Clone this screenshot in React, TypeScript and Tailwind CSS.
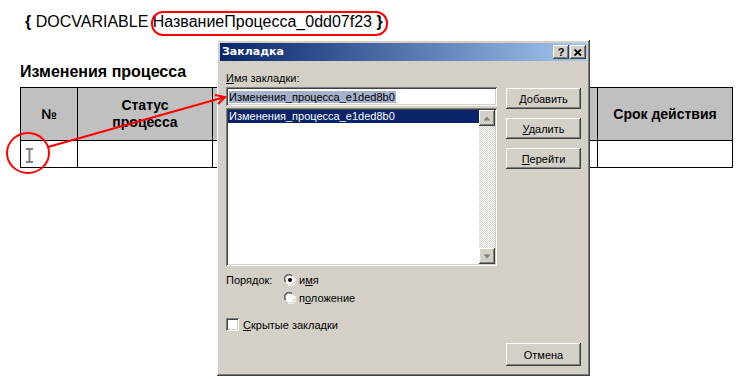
import React from 'react'

// classic win2k bevels
const raised =
  'bg-[#d4d0c8] shadow-[inset_-1px_-1px_#404040,inset_1px_1px_#ffffff,inset_-2px_-2px_#808080,inset_2px_2px_#d4d0c8]'
const sunken =
  'shadow-[inset_1px_1px_#808080,inset_-1px_-1px_#ffffff,inset_2px_2px_#404040,inset_-2px_-2px_#d4d0c8]'

function WinButton({ children, className = '' }: { children: React.ReactNode; className?: string }) {
  return (
    <div className={`${raised} flex h-[21px] w-[75px] items-center justify-center text-black ${className}`}>
      {children}
    </div>
  )
}

function Radio({ checked }: { checked?: boolean }) {
  return (
    <svg width="12" height="12" viewBox="0 0 12 12" className="shrink-0">
      <path d="M1 8 A5 5 0 0 1 8 1" fill="none" stroke="#808080" strokeWidth="1" />
      <path d="M4 11 A5 5 0 0 0 11 4" fill="none" stroke="#ffffff" strokeWidth="1" />
      <circle cx="6" cy="6" r="4.5" fill="#ffffff" />
      <path d="M2 8 A4 4 0 0 1 8 2" fill="none" stroke="#404040" strokeWidth="1" />
      {checked && <circle cx="6" cy="6" r="2" fill="#000000" />}
    </svg>
  )
}

function ScrollArrow({ up }: { up?: boolean }) {
  return (
    <div className={`${raised} flex h-[16px] w-[16px] items-center justify-center`}>
      <svg width="8" height="5" viewBox="0 0 8 5">
        {up ? (
          <polygon points="4,0.5 7.5,4.5 0.5,4.5" fill="#808080" />
        ) : (
          <polygon points="0.5,0.5 7.5,0.5 4,4.5" fill="#808080" />
        )}
      </svg>
    </div>
  )
}

function BookmarkDialog() {
  return (
    <div
      className={`${raised} absolute left-[217px] top-[40px] flex h-[336px] w-[373px] flex-col p-[3px] font-['Liberation_Sans',Arial,sans-serif] text-[11px] leading-[12px]`}
    >
      {/* Title bar */}
      <div className="flex h-[18px] items-center bg-gradient-to-r from-[#0a246a] to-[#a6caf0] pl-[2px] pr-[1px]">
        <span className="flex-1 font-['DejaVu_Sans',sans-serif] text-[11px] font-bold text-white">Закладка</span>
        <div className={`${raised} flex h-[14px] w-[16px] items-center justify-center text-[11px] font-bold text-black`}>?</div>
        <div className={`${raised} ml-[1px] flex h-[14px] w-[16px] items-center justify-center`}>
          <svg width="8" height="7" viewBox="0 0 8 7">
            <path d="M0.5 0.5 L7 6.5 M7 0.5 L0.5 6.5" stroke="#000" strokeWidth="1.8" />
          </svg>
        </div>
      </div>

      <div className="flex flex-1 gap-[9px] pl-[6px]">
        {/* left column */}
        <div className="flex w-[271px] flex-col">
          <div className="mt-[11px] h-[12px]">
            <u>И</u>мя закладки:
          </div>
          <div className={`${sunken} mt-[3px] flex h-[19px] items-center bg-white pl-[3px]`}>
            <span className="bg-[#a6b2cc] pr-[1px] text-black">Изменения_процесса_e1ded8b0</span>
          </div>
          <div className={`${sunken} mt-[2px] flex h-[158px] bg-white p-[2px]`}>
            <div className="flex-1">
              <div className="h-[13px] bg-[#0a246a] pl-[1px] text-white">Изменения_процесса_e1ded8b0</div>
            </div>
            <div className="flex w-[16px] flex-col justify-between bg-[repeating-conic-gradient(#d4d0c8_0_25%,#ffffff_0_50%)] bg-[length:2px_2px]">
              <ScrollArrow up />
              <ScrollArrow />
            </div>
          </div>

          <div className="mt-[7px] flex h-[13px] items-center">
            <span className="w-[58px]">Порядок:</span>
            <Radio checked />
            <span className="ml-[3px]">
              и<u>м</u>я
            </span>
          </div>
          <div className="mt-[5px] flex h-[13px] items-center pl-[58px]">
            <Radio />
            <span className="ml-[3px]">
              п<u>о</u>ложение
            </span>
          </div>
          <div className="mt-[14px] flex h-[13px] items-center">
            <div className={`${sunken} h-[13px] w-[13px] bg-white`} />
            <span className="ml-[4px]">
              <u>С</u>крытые закладки
            </span>
          </div>
        </div>

        {/* right column */}
        <div className="flex flex-col pt-[27px]">
          <WinButton>
            <span>
              <u>Д</u>обавить
            </span>
          </WinButton>
          <WinButton className="mt-[9px]">
            <span>
              <u>У</u>далить
            </span>
          </WinButton>
          <WinButton className="mt-[9px]">
            <span>
              <u>П</u>ерейти
            </span>
          </WinButton>
          <WinButton className="mb-[7px] mt-auto h-[23px]">Отмена</WinButton>
        </div>
      </div>
    </div>
  )
}

export default function App() {
  return (
    <div className="relative h-[379px] w-[737px] overflow-hidden bg-white font-['Liberation_Sans',Arial,sans-serif] text-black">
      {/* Document */}
      <div className="pl-[20px]">
        <div className="pl-[5px] pt-[13px] text-[16px] leading-[18px]">
          <b>{'{'}</b> DOCVARIABLE НазваниеПроцесса_0dd07f23 <b>{'}'}</b>
        </div>
        <div className="mt-[32px] text-[16px] font-bold leading-[18px]">Изменения процесса</div>

        <div className="mt-[6px] grid w-[713px] grid-cols-[57px_135px_193px_192px_135px] border-l border-t border-black text-[14px] font-bold leading-[17px]">
          <div className="flex h-[53px] items-center justify-center border-b border-r border-black bg-[#c0c0c0]">№</div>
          <div className="flex h-[53px] items-center justify-center border-b border-r border-black bg-[#c0c0c0] text-center">
            Статус
            <br />
            процесса
          </div>
          <div className="h-[53px] border-b border-r border-black bg-[#c0c0c0]" />
          <div className="h-[53px] border-b border-r border-black bg-[#c0c0c0]" />
          <div className="flex h-[53px] items-center justify-center border-b border-r border-black bg-[#c0c0c0]">
            Срок действия
          </div>
          <div className="h-[27px] border-b border-r border-black pl-[4px] pt-[7px]">
            <svg width="9" height="15" viewBox="0 0 9 15">
              <path d="M1 1 H8 M4.5 1 V14 M1 14 H8" stroke="#808080" strokeWidth="2" fill="none" />
            </svg>
          </div>
          <div className="h-[27px] border-b border-r border-black" />
          <div className="h-[27px] border-b border-r border-black" />
          <div className="h-[27px] border-b border-r border-black" />
          <div className="h-[27px] border-b border-r border-black" />
        </div>
      </div>

      <BookmarkDialog />

      {/* red annotations drawn over everything */}
      <svg className="pointer-events-none absolute inset-0" width="737" height="379" viewBox="0 0 737 379">
        <rect x="152" y="12" width="235" height="23" rx="11" fill="none" stroke="#ff0000" strokeWidth="2" />
        <ellipse cx="28" cy="153" rx="21" ry="20" fill="none" stroke="#ff0000" strokeWidth="2" />
        <line x1="48" y1="147" x2="225" y2="97" stroke="#ff0000" strokeWidth="2" />
        <polyline points="215,95 225,97 218,104" fill="none" stroke="#ff0000" strokeWidth="2" />
      </svg>
    </div>
  )
}
